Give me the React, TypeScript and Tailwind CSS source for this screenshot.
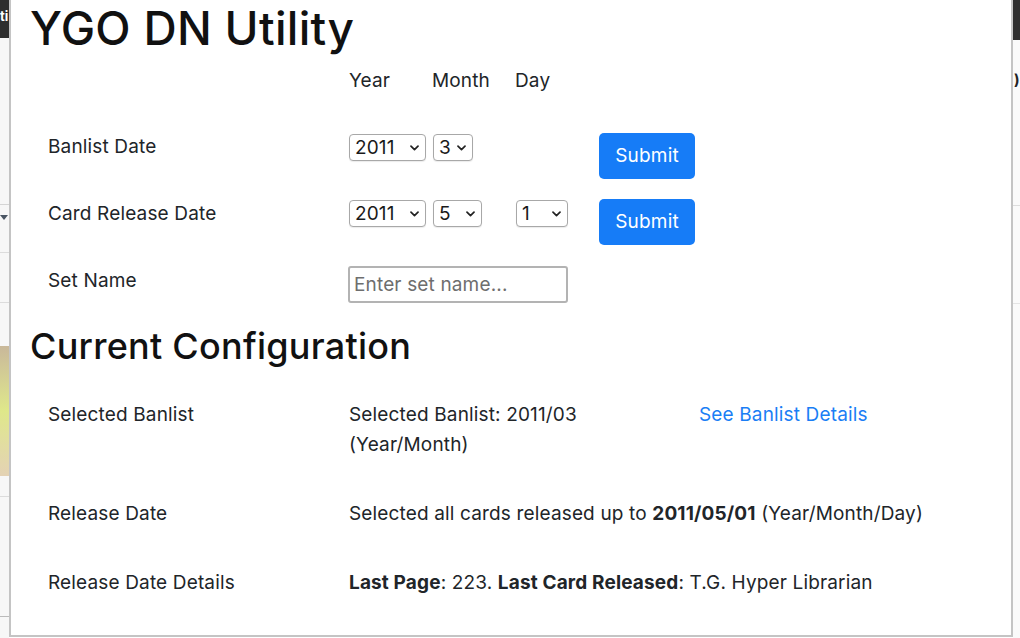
import React from 'react';

const font = { fontFamily: 'Inter, "Liberation Sans", sans-serif' };

function Chevron() {
    return (
        <svg width="9" height="6" viewBox="0 0 9 6" className="pointer-events-none absolute right-[7px] top-[11px]">
            <path d="M1 1.2 L4.5 4.6 L8 1.2" fill="none" stroke="#222" strokeWidth="1.7" strokeLinecap="round" strokeLinejoin="round" />
        </svg>
    );
}

function Select({ value, width }: { value: string; width: string }) {
    return (
        <div className={`relative h-[27px] ${width}`}>
            <div className="h-full w-full rounded-[4px] border border-[#a8a8a8] bg-white pl-[5px] text-[19px] leading-[25px] text-[#1a1a1a] shadow-[0_1px_1px_rgba(0,0,0,0.08)]">
                {value}
            </div>
            <Chevron />
        </div>
    );
}

function SubmitButton() {
    return (
        <button className="h-[46px] w-[96px] rounded-[5px] bg-[#167cf7] text-[19px] tracking-[0.2px] text-white">
            Submit
        </button>
    );
}

function LeftStrip() {
    return (
        <div className="flex w-[9px] shrink-0 flex-col bg-[#f7f7f7]">
            <div className="h-[38px] overflow-hidden bg-[#2e2e2e] pt-[10px] text-[13px] font-bold leading-none text-white">ti</div>
            <div className="h-[166px]" />
            <div className="relative h-[48px] border-t border-[#d5d5d5]">
                <div className="absolute left-0 top-[10px] h-0 w-0 border-x-[4px] border-t-[5px] border-x-transparent border-t-[#4a5563]" />
            </div>
            <div className="h-[50px] border-t border-[#dcdcdc]" />
            <div className="h-[44px] border-t border-[#dcdcdc]" />
            <div className="h-[130px] bg-gradient-to-b from-[#c9b89a] via-[#dfe88a] to-[#e4d2b4]" />
            <div className="h-[20px]" />
            <div className="h-[120px] border-t border-[#dcdcdc]" />
            <div className="flex-1 border-t border-[#bbb]" />
        </div>
    );
}

function RightStrip() {
    return (
        <div className="flex flex-1 flex-col bg-[#fafafa]">
            <div className="h-[40px] bg-[#2e2e2e]" />
            <div className="h-[30px]" />
            <div className="pl-[1px] text-[15px] font-bold leading-[20px] text-[#222]">)</div>
            <div className="h-[115px]" />
            <div className="h-[98px] border-t border-[#ddd]" />
            <div className="flex-1 border-t border-[#e4e4e4]" />
        </div>
    );
}

function ConfigRow({ label, children, extra, className }: { label: string; children: React.ReactNode; extra?: React.ReactNode; className?: string }) {
    return (
        <div className={`flex pl-[18px] text-[19px] leading-[30px] tracking-[0.15px] text-[#212529] ${className ?? ''}`}>
            <div className="w-[301px] shrink-0">{label}</div>
            <div className="w-[350px] shrink-0">{children}</div>
            <div>{extra}</div>
        </div>
    );
}

export default function App() {
    return (
        <div className="flex h-[638px] w-[1020px] overflow-hidden bg-white" style={font}>
            <LeftStrip />
            <div className="h-[637px] w-[1004px] shrink-0 border-x-2 border-b-2 border-[#c4c4c4] bg-white px-[19px]">
                <h1 className="text-[46px] font-medium leading-[56px] tracking-[0.3px] text-[#111]">YGO DN Utility</h1>

                <div className="mt-[11px] flex pl-[319px] text-[19px] leading-[28px] tracking-[0.15px] text-[#212529]">
                    <div className="w-[83px]">Year</div>
                    <div className="w-[83px]">Month</div>
                    <div>Day</div>
                </div>

                <div className="mt-[38px] flex h-[66px] pl-[18px] text-[19px] leading-[28px] tracking-[0.15px] text-[#212529]">
                    <div className="w-[301px] pt-[0px]">Banlist Date</div>
                    <div className="flex w-[250px] gap-[7px] pt-[1px]">
                        <Select value="2011" width="w-[77px]" />
                        <Select value="3" width="w-[40px]" />
                    </div>
                    <SubmitButton />
                </div>

                <div className="flex h-[67px] pl-[18px] text-[19px] leading-[28px] tracking-[0.15px] text-[#212529]">
                    <div className="w-[301px] pt-[1px]">Card Release Date</div>
                    <div className="flex w-[250px] pt-[1px]">
                        <div className="w-[84px]"><Select value="2011" width="w-[77px]" /></div>
                        <div className="w-[83px]"><Select value="5" width="w-[49px]" /></div>
                        <Select value="1" width="w-[52px]" />
                    </div>
                    <SubmitButton />
                </div>

                <div className="flex pl-[18px] text-[19px] leading-[28px] tracking-[0.15px] text-[#212529]">
                    <div className="w-[300px] pt-[1px]">Set Name</div>
                    <input
                        placeholder="Enter set name..."
                        className="h-[37px] w-[220px] rounded-[3px] border-2 border-[#b3b3b3] bg-white px-[4px] text-[19px] text-[#222] placeholder:text-[#6e6e6e] outline-none"
                    />
                </div>

                <h2 className="mt-[20px] text-[36px] font-medium leading-[46px] tracking-[0.25px] text-[#111]">Current Configuration</h2>

                <ConfigRow
                    label="Selected Banlist"
                    className="mt-[31px]"
                    extra={<a className="text-[#1a7ef5]">See Banlist Details</a>}
                >
                    <div className="w-[250px]">Selected Banlist: 2011/03 (Year/Month)</div>
                </ConfigRow>

                <ConfigRow label="Release Date" className="mt-[39px]">
                    <span className="whitespace-nowrap">
                        Selected all cards released up to <b>2011/05/01</b> (Year/Month/Day)
                    </span>
                </ConfigRow>

                <ConfigRow label="Release Date Details" className="mt-[39px]">
                    <span className="whitespace-nowrap">
                        <b>Last Page</b>: 223. <b>Last Card Released</b>: T.G. Hyper Librarian
                    </span>
                </ConfigRow>
            </div>
            <RightStrip />
        </div>
    );
}
